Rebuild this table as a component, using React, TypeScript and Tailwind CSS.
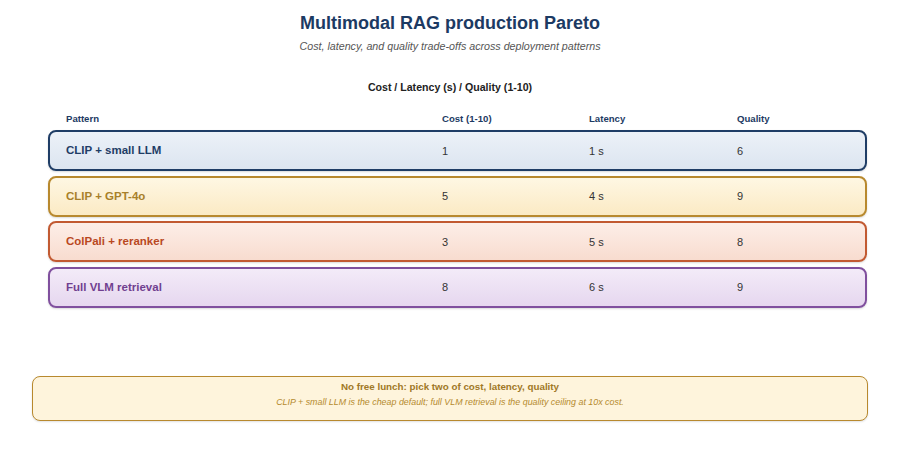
import React from "react";

const rows = [
  {
    name: "CLIP + small LLM",
    cost: "1",
    lat: "1 s",
    q: "6",
    cls: "border-[#1f3d66] bg-gradient-to-b from-[#ecf1f8] to-[#dce5f0]",
    text: "text-[#1f3d66]",
  },
  {
    name: "CLIP + GPT-4o",
    cost: "5",
    lat: "4 s",
    q: "9",
    cls: "border-[#b8892e] bg-gradient-to-b from-[#fef7e3] to-[#fbeac4]",
    text: "text-[#a8802a]",
  },
  {
    name: "ColPali + reranker",
    cost: "3",
    lat: "5 s",
    q: "8",
    cls: "border-[#c25a32] bg-gradient-to-b from-[#fdeee8] to-[#f8dccf]",
    text: "text-[#b9481f]",
  },
  {
    name: "Full VLM retrieval",
    cost: "8",
    lat: "6 s",
    q: "9",
    cls: "border-[#80509e] bg-gradient-to-b from-[#f3ebf8] to-[#e6d7ef]",
    text: "text-[#713f90]",
  },
];

export default function App() {
  return (
    <div
      className="w-[900px] h-[475px] bg-white flex flex-col"
      style={{ fontFamily: '"Liberation Sans", Arial, sans-serif' }}
    >
      <div className="flex flex-col items-center pt-[12px]">
        <div className="text-[18px] leading-[22px] font-bold text-[#1c3a63]">
          Multimodal RAG production Pareto
        </div>
        <div className="mt-[5px] text-[10.7px] leading-[14px] italic text-[#555]">
          Cost, latency, and quality trade-offs across deployment patterns
        </div>
        <div className="mt-[27px] text-[10.6px] leading-[14px] font-bold text-[#222]">
          Cost / Latency (s) / Quality (1-10)
        </div>
      </div>

      <div className="pl-[48px] pr-[33px] mt-[19px]">
        <div className="grid grid-cols-[376px_147px_148px_1fr] pl-[18px] text-[9.6px] leading-[12px] font-bold text-[#1c3a63]">
          <div>Pattern</div>
          <div>Cost (1-10)</div>
          <div>Latency</div>
          <div>Quality</div>
        </div>
        <div className="mt-[5px] flex flex-col gap-[4.5px]">
          {rows.map((r) => (
            <div
              key={r.name}
              className={`h-[41px] rounded-[8px] border-2 shadow-[0_1px_2px_rgba(0,0,0,0.15)] grid grid-cols-[376px_147px_148px_1fr] items-center pl-[16px] pt-[1px] ${r.cls}`}
            >
              <div className={`text-[11.5px] font-bold ${r.text}`}>{r.name}</div>
              <div className="text-[11px] text-[#333]">{r.cost}</div>
              <div className="text-[11px] text-[#333]">{r.lat}</div>
              <div className="text-[11px] text-[#333]">{r.q}</div>
            </div>
          ))}
        </div>
      </div>

      <div className="pl-[32px] pr-[32px] mt-[68px]">
        <div className="h-[45px] rounded-[8px] border border-[#b8892e] bg-[#fef4dc] shadow-[0_1px_2px_rgba(0,0,0,0.12)] flex flex-col items-center pt-[3px]">
          <div className="text-[9.8px] leading-[13px] font-bold text-[#a07826]">
            No free lunch: pick two of cost, latency, quality
          </div>
          <div className="mt-[4px] text-[8.9px] leading-[11px] italic text-[#b58a2e]">
            CLIP + small LLM is the cheap default; full VLM retrieval is the quality ceiling at 10x cost.
          </div>
        </div>
      </div>
    </div>
  );
}
